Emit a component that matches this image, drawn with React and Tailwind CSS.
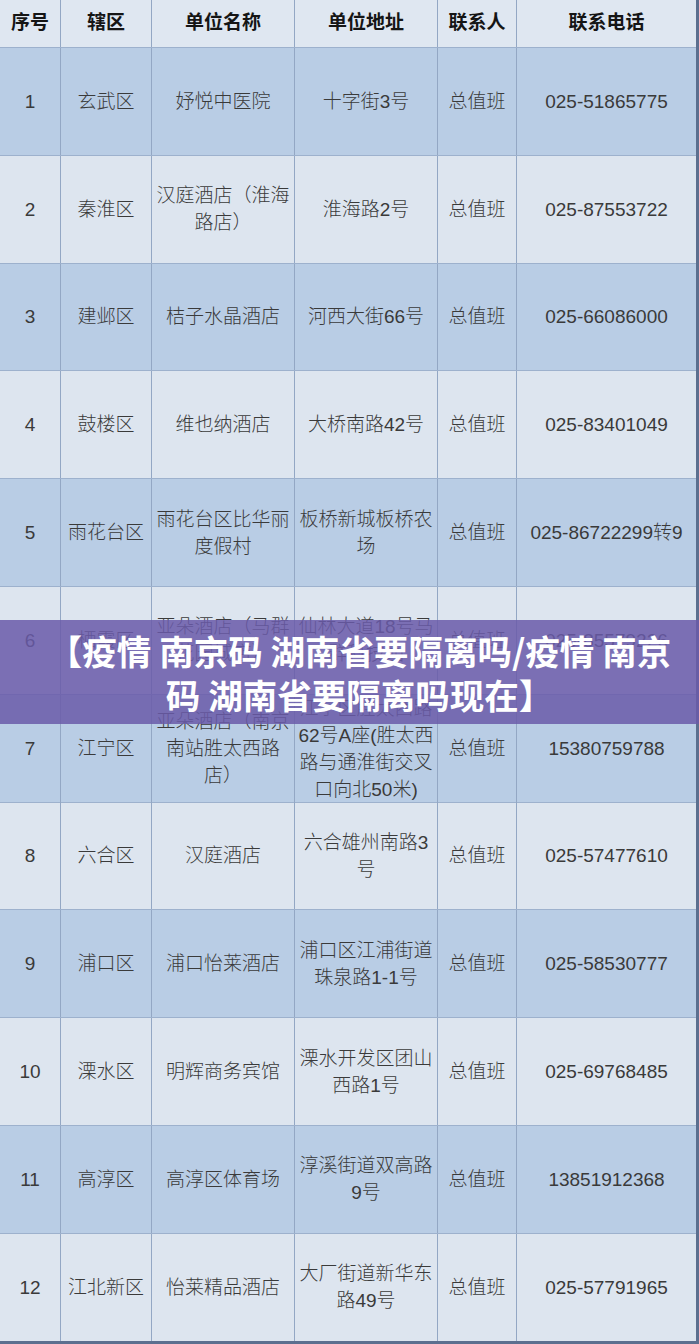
import React from "react";

const rows = [
  ["1", "玄武区", "妤悦中医院", "十字街3号", "总值班", "025-51865775"],
  ["2", "秦淮区", "汉庭酒店（淮海路店）", "淮海路2号", "总值班", "025-87553722"],
  ["3", "建邺区", "桔子水晶酒店", "河西大街66号", "总值班", "025-66086000"],
  ["4", "鼓楼区", "维也纳酒店", "大桥南路42号", "总值班", "025-83401049"],
  ["5", "雨花台区", "雨花台区比华丽度假村", "板桥新城板桥农场", "总值班", "025-86722299转9"],
  ["6", "栖霞区", "亚朵酒店（马群花园城店）", "仙林大道18号马群科技园", "总值班", "025-85579226"],
  [
    "7",
    "江宁区",
    "亚朵酒店（南京南站胜太西路店）",
    "江宁区胜太西路62号A座(胜太西路与通淮街交叉口向北50米)",
    "总值班",
    "15380759788",
  ],
  ["8", "六合区", "汉庭酒店", "六合雄州南路3号", "总值班", "025-57477610"],
  ["9", "浦口区", "浦口怡莱酒店", "浦口区江浦街道珠泉路1-1号", "总值班", "025-58530777"],
  ["10", "溧水区", "明辉商务宾馆", "溧水开发区团山西路1号", "总值班", "025-69768485"],
  ["11", "高淳区", "高淳区体育场", "淳溪街道双高路9号", "总值班", "13851912368"],
  ["12", "江北新区", "怡莱精品酒店", "大厂街道新华东路49号", "总值班", "025-57791965"],
];

const headers = ["序号", "辖区", "单位名称", "单位地址", "联系人", "联系电话"];

const Cell = ({ children, first, className = "" }) => (
  <div
    className={
      "flex items-center justify-center text-center px-[3px] " +
      (first ? "" : "border-l border-[#93a7c4] ") +
      className
    }
  >
    {children}
  </div>
);

const App = () => {
  return (
    <div
      className="relative w-[699px] h-[1344px] overflow-hidden bg-[#dde5ef]"
      style={{ fontFamily: '"Liberation Sans", "Noto Sans CJK SC", sans-serif' }}
    >
      <div className="w-[699px] border-r-[3px] border-b-[3px] border-[#5c6f8f]">
        {/* header */}
        <div className="grid grid-cols-[60px_91px_143px_143px_79px_180px] h-[47px] bg-[#dfe7f1] text-[19px] font-bold text-[#151515]">
          {headers.map((h, i) => (
            <Cell key={h} first={i === 0}>
              {h}
            </Cell>
          ))}
        </div>

        {rows.map((r, idx) => (
          <div
            key={r[0]}
            className={
              "grid grid-cols-[60px_91px_143px_143px_79px_180px] h-[107.8px] border-t border-[#9db1cd] text-[19px] leading-[27px] font-light text-[#3a3a3a] " +
              (idx % 2 === 0 ? "bg-[#b9cde5]" : "bg-[#dde5ef]")
            }
          >
            {r.map((c, i) => (
              <Cell key={i} first={i === 0}>
                {c}
              </Cell>
            ))}
          </div>
        ))}
      </div>

      {/* title banner over the table */}
      <div className="absolute left-0 top-[620px] w-full h-[104px] bg-[#6a5ba9]/85 flex items-center justify-center pl-[20px]">
        <p
          className="text-white font-bold text-[34.5px] leading-[44px] text-center"
          style={{ fontFamily: '"Noto Sans CJK SC", sans-serif' }}
        >
          【疫情 南京码 湖南省要隔离吗/疫情 南京
          <br />
          码 湖南省要隔离吗现在】
        </p>
      </div>
    </div>
  );
};

export default App;
